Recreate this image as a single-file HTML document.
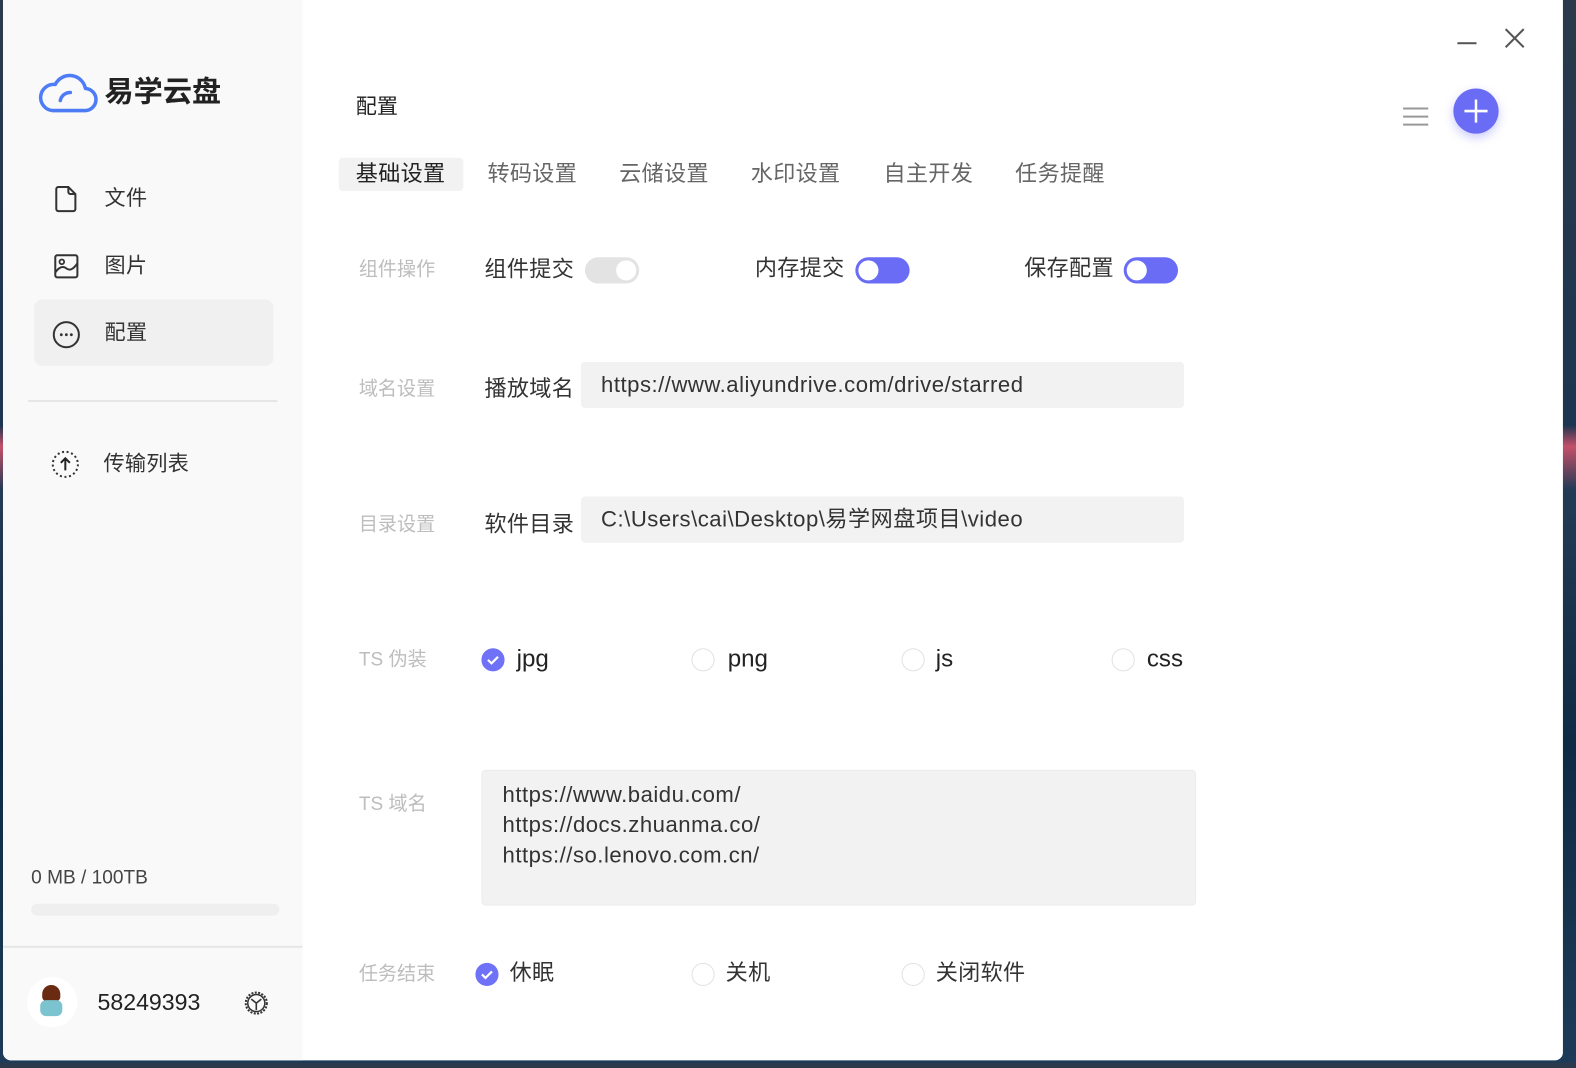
<!DOCTYPE html>
<html><head><meta charset="utf-8"><style>
*{margin:0;padding:0;box-sizing:border-box}
body{width:1576px;height:1063px;overflow:hidden;background:linear-gradient(180deg,#2a3a4c 0%,#1c3550 40%,#c4506a 42%,#243b55 46%,#0f2a44 70%,#1d3b58 100%);font-family:"Liberation Sans","Noto Sans CJK SC",sans-serif;position:relative}
.wrap{position:absolute;left:0;top:0;width:1576px;height:1063px;transform:scale(1.0051);transform-origin:0 0}
.win{position:absolute;left:3px;top:0;width:1552px;height:1055px;background:#fff;border-radius:0 0 8px 8px;overflow:hidden}
.side{position:absolute;left:0;top:0;width:298px;height:1055px;background:#f9f9f9}
.t{position:absolute;white-space:nowrap;line-height:1}
.lbl{color:#bdbdbd;font-size:19px}
.k{color:#333;font-size:22px;letter-spacing:0.3px}
.inp{position:absolute;background:#f2f2f2;border-radius:4px}
.tog{position:absolute;width:54px;height:26px;border-radius:13px;background:#6a6cf5}
.tog::after{content:"";position:absolute;top:3px;left:3px;width:20px;height:20px;border-radius:50%;background:#fff}
.tog.off{background:#e3e3e3}.tog.off::after{left:31px}
.rad{position:absolute;width:23px;height:23px;border-radius:50%;border:1.5px solid #e2e2e2;background:#fff}
.rad.on{background:#6f72f6;border-color:#6f72f6}
.tab{position:absolute;top:161px;font-size:22px;color:#666;line-height:24px;letter-spacing:0.3px}
.url{position:absolute;white-space:nowrap;font-size:22px;color:#333;letter-spacing:0.5px;line-height:1}
</style></head><body>
<div class="wrap">
<div class="win">
<div class="side">
 <svg style="position:absolute;left:35px;top:70px" width="60" height="44" viewBox="0 0 60 44"><path d="M14 40 H46 A11 11 0 0 0 47 18 A16 16 0 0 0 17 14 A13 13 0 0 0 14 40 Z M22 30 A10 10 0 0 1 32 22" fill="none" stroke="#4d7cf6" stroke-width="3.5" stroke-linecap="round" stroke-linejoin="round"/></svg>
 <div class="t" style="left:101px;top:78px;font-size:29px;font-weight:bold;color:#222">易学云盘</div>
 <svg style="position:absolute;left:49px;top:183px" width="28" height="30" viewBox="0 0 28 30"><path d="M6 3 H16 L23 10 V25 A2 2 0 0 1 21 27 H6 A2 2 0 0 1 4 25 V5 A2 2 0 0 1 6 3 Z M16 3 V8 A2 2 0 0 0 18 10 H23" fill="none" stroke="#333" stroke-width="2"/></svg>
 <div class="t k" style="left:101px;top:187px;font-size:21px">文件</div>
 <svg style="position:absolute;left:49px;top:251px" width="28" height="28" viewBox="0 0 28 28"><rect x="3" y="3" width="22" height="22" rx="2" fill="none" stroke="#333" stroke-width="2"/><circle cx="9.5" cy="9.5" r="2.3" fill="none" stroke="#333" stroke-width="1.8"/><path d="M3 20 Q9 12 14 16 T25 11" fill="none" stroke="#333" stroke-width="2"/></svg>
 <div class="t k" style="left:101px;top:254px;font-size:21px">图片</div>
 <div style="position:absolute;left:31px;top:298px;width:238px;height:66px;background:#f0f0f0;border-radius:8px"></div>
 <svg style="position:absolute;left:48px;top:318px" width="30" height="30" viewBox="0 0 30 30"><circle cx="15" cy="15" r="12.5" fill="none" stroke="#333" stroke-width="2"/><circle cx="10" cy="15" r="1.4" fill="#333"/><circle cx="15" cy="15" r="1.4" fill="#333"/><circle cx="20" cy="15" r="1.4" fill="#333"/></svg>
 <div class="t k" style="left:101px;top:321px;font-size:21px">配置</div>
 <div style="position:absolute;left:25px;top:398px;width:248px;height:2px;background:#e6e6e6"></div>
 <svg style="position:absolute;left:47px;top:447px" width="30" height="30" viewBox="0 0 30 30"><circle cx="15" cy="15" r="12.5" fill="none" stroke="#333" stroke-width="2" stroke-dasharray="2 2.6"/><path d="M15 21 V9 M10.5 13.5 L15 9 L19.5 13.5" fill="none" stroke="#222" stroke-width="2"/></svg>
 <div class="t k" style="left:100px;top:451px;font-size:21px">传输列表</div>
 <div class="t" style="left:28px;top:864px;font-size:19px;color:#444">0 MB / 100TB</div>
 <div style="position:absolute;left:28px;top:899px;width:247px;height:12px;border-radius:6px;background:#efefef"></div>
 <div style="position:absolute;left:0;top:941px;width:298px;height:2px;background:#e6e6e6"></div>
 <div style="position:absolute;left:24px;top:972px;width:50px;height:50px;border-radius:50%;background:#fff;overflow:hidden">
  <div style="position:absolute;left:15px;top:8px;width:18px;height:16px;border-radius:9px 9px 4px 4px;background:#6b2a12"></div>
  <div style="position:absolute;left:13px;top:23px;width:22px;height:16px;border-radius:6px;background:#7cc3d0"></div>
 </div>
 <div class="t" style="left:94px;top:986px;font-size:23px;color:#222">58249393</div>
 <svg style="position:absolute;left:238px;top:984px" width="28" height="28" viewBox="0 0 28 28"><circle cx="14" cy="14" r="10.5" fill="none" stroke="#333" stroke-width="2" stroke-dasharray="2 1.4"/><circle cx="14" cy="14" r="8.5" fill="none" stroke="#333" stroke-width="1.5"/><path d="M9 10 L14 14 L19 10 M14 14 V21" fill="none" stroke="#333" stroke-width="1.6"/></svg>
</div>

<div style="position:absolute;left:1447px;top:42px;width:19px;height:2px;background:#555"></div>
<svg style="position:absolute;left:1492px;top:26px" width="24" height="24" viewBox="0 0 24 24"><path d="M3 3 L21 21 M21 3 L3 21" stroke="#555" stroke-width="2"/></svg>
<svg style="position:absolute;left:1392px;top:105px" width="28" height="22" viewBox="0 0 28 22"><path d="M1 3 H26 M1 11 H26 M1 19 H26" stroke="#999" stroke-width="2"/></svg>
<div style="position:absolute;left:1443px;top:88px;width:45px;height:45px;border-radius:50%;background:#6a6cf5;box-shadow:0 4px 10px rgba(106,108,245,.35)"></div>
<svg style="position:absolute;left:1443px;top:88px" width="45" height="45" viewBox="0 0 45 45"><path d="M22.5 11 V34 M11 22.5 H34" stroke="#fff" stroke-width="2.5"/></svg>

<div class="t" style="left:351px;top:96px;font-size:21px;color:#222">配置</div>
<div style="position:absolute;left:334px;top:157px;width:124px;height:33px;background:#f2f2f2;border-radius:4px"></div>
<div class="tab" style="left:351px;color:#222">基础设置</div>
<div class="tab" style="left:482px">转码设置</div>
<div class="tab" style="left:613px">云储设置</div>
<div class="tab" style="left:744px">水印设置</div>
<div class="tab" style="left:876px">自主开发</div>
<div class="tab" style="left:1007px">任务提醒</div>

<div class="t lbl" style="left:354px;top:259px">组件操作</div>
<div class="t k" style="left:479px;top:257px">组件提交</div>
<div class="tog off" style="left:579px;top:256px"></div>
<div class="t k" style="left:748px;top:256px">内存提交</div>
<div class="tog" style="left:848px;top:256px"></div>
<div class="t k" style="left:1016px;top:256px">保存配置</div>
<div class="tog" style="left:1115px;top:256px"></div>

<div class="t lbl" style="left:354px;top:378px">域名设置</div>
<div class="t k" style="left:479px;top:376px">播放域名</div>
<div class="inp" style="left:575px;top:360px;width:600px;height:46px"></div>
<div class="url" style="left:595px;top:372px">https://www.aliyundrive.com/drive/starred</div>

<div class="t lbl" style="left:354px;top:513px">目录设置</div>
<div class="t k" style="left:479px;top:511px">软件目录</div>
<div class="inp" style="left:575px;top:494px;width:600px;height:46px"></div>
<div class="url" style="left:595px;top:506px">C:\Users\cai\Desktop\易学网盘项目\video</div>

<div class="t lbl" style="left:354px;top:647px">TS 伪装</div>
<div class="rad on" style="left:476px;top:645px"></div>
<svg style="position:absolute;left:476px;top:645px" width="23" height="23" viewBox="0 0 23 23"><path d="M6.5 11.5 L10 15 L16.5 8.5" fill="none" stroke="#fff" stroke-width="2.2"/></svg>
<div class="t" style="left:511px;top:644px;font-size:24px;color:#222">jpg</div>
<div class="rad" style="left:685px;top:645px"></div>
<div class="t" style="left:721px;top:644px;font-size:24px;color:#222">png</div>
<div class="rad" style="left:894px;top:645px"></div>
<div class="t" style="left:928px;top:644px;font-size:24px;color:#222">js</div>
<div class="rad" style="left:1103px;top:645px"></div>
<div class="t" style="left:1138px;top:644px;font-size:24px;color:#222">css</div>

<div class="t lbl" style="left:354px;top:791px">TS 域名</div>
<div class="inp" style="left:476px;top:766px;width:711px;height:135px;border:1px solid #ececec"></div>
<div class="url" style="left:497px;top:776px;line-height:30px">https://www.baidu.com/<br>https://docs.zhuanma.co/<br>https://so.lenovo.com.cn/</div>

<div class="t lbl" style="left:354px;top:960px">任务结束</div>
<div class="rad on" style="left:470px;top:958px"></div>
<svg style="position:absolute;left:470px;top:958px" width="23" height="23" viewBox="0 0 23 23"><path d="M6.5 11.5 L10 15 L16.5 8.5" fill="none" stroke="#fff" stroke-width="2.2"/></svg>
<div class="t k" style="left:504px;top:957px">休眠</div>
<div class="rad" style="left:685px;top:958px"></div>
<div class="t k" style="left:719px;top:957px">关机</div>
<div class="rad" style="left:894px;top:958px"></div>
<div class="t k" style="left:928px;top:957px">关闭软件</div>
</div>
</div>
</body></html>
